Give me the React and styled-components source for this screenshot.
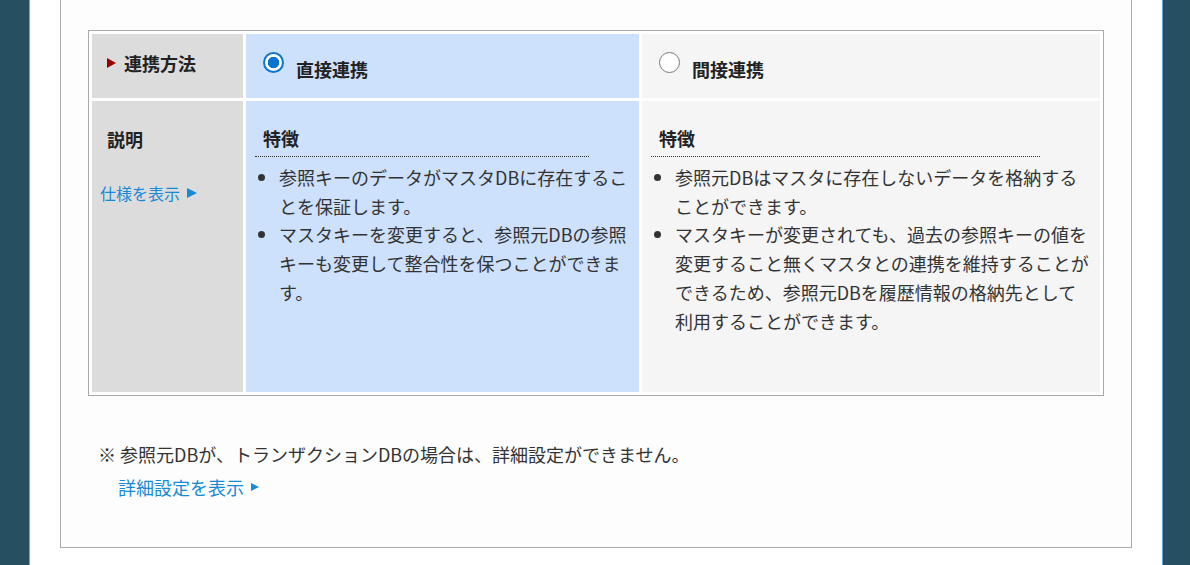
import React from 'react';
import styled, { createGlobalStyle } from 'styled-components';

const GlobalStyle = createGlobalStyle`
  html, body {
    margin: 0;
    padding: 0;
    background: #ffffff;
    overflow: hidden;
  }
  body {
    font-family: 'Noto Sans CJK JP', 'Noto Sans', sans-serif;
    color: #333;
  }
`;

const Page = styled.div`
  display: flex;
  height: 565px;
`;

const SideBar = styled.div`
  flex-shrink: 0;
  width: ${({ $width }) => $width}px;
  background: #264f61;
  border-${({ $edge }) => $edge}: 1px solid #5fa6d8;
`;

const Main = styled.main`
  flex: 1;
  padding: 0 30px;
  background: #ffffff;
`;

const Panel = styled.section`
  background: #fdfdfd;
  border: 1px solid #aaaaaa;
  border-top: none;
  padding: 30px 27px 45px;
`;

const Table = styled.table`
  width: 100%;
  table-layout: fixed;
  border-collapse: separate;
  border-spacing: 3px;
  border: 1px solid #a9a9a9;
  background: #ffffff;
`;

const Cell = styled.td`
  padding: 0;
  vertical-align: top;
  height: ${({ $height }) => $height}px;
  background: ${({ $tone }) =>
    $tone === 'label' ? '#dcdcdc' : $tone === 'selected' ? '#cde0fc' : '#f5f5f5'};
`;

const HeadLabel = styled.div`
  display: flex;
  align-items: center;
  height: 58px;
  padding-left: 15px;
  font-size: 18px;
  font-weight: 700;
  color: #222;

  &::before {
    content: '';
    width: 0;
    height: 0;
    margin-right: 8px;
    border-left: 9px solid #990000;
    border-top: 5.5px solid transparent;
    border-bottom: 5.5px solid transparent;
  }
`;

const OptionHead = styled.label`
  display: flex;
  align-items: flex-start;
  gap: 12px;
  padding: 18px 0 0 17px;
  font-size: 18px;
  font-weight: 700;
  line-height: 28.8px;
  color: #222;

  span:last-child {
    padding-top: 3px;
  }
`;

const Radio = styled.span`
  flex-shrink: 0;
  box-sizing: border-box;
  width: 21px;
  height: 21px;
  border-radius: 50%;
  border: ${({ $checked }) => ($checked ? '2px solid #0a74d0' : '1px solid #7a7a7a')};
  background: ${({ $checked }) =>
    $checked ? 'radial-gradient(circle, #0a74d0 0 5.4px, #ffffff 6px)' : '#ffffff'};
`;

const DescLabel = styled.div`
  padding: 24px 8px 0;
`;

const DescTitle = styled.div`
  padding-left: 7px;
  font-size: 18px;
  font-weight: 700;
  line-height: 28.8px;
  color: #222;
`;

const MoreLink = styled.a`
  display: inline-flex;
  align-items: center;
  margin-top: ${({ $top }) => $top}px;
  margin-left: ${({ $indent }) => $indent || 0}px;
  font-size: ${({ $size }) => $size}px;
  line-height: ${({ $size }) => Math.round($size * 1.6)}px;
  color: #168ad6;
  text-decoration: none;
  cursor: pointer;

  &::after {
    content: '';
    width: 0;
    height: 0;
    margin-left: ${({ $gap }) => $gap}px;
    border-left: ${({ $arrow }) => $arrow}px solid #168ad6;
    border-top: ${({ $arrow }) => $arrow / 2}px solid transparent;
    border-bottom: ${({ $arrow }) => $arrow / 2}px solid transparent;
  }
`;

const Feature = styled.div`
  padding-top: 23px;
`;

const FeatureTitle = styled.h4`
  box-sizing: border-box;
  width: 85%;
  margin: 0 0 0 9px;
  padding: 0 0 3px 8px;
  border-bottom: 1px dotted #333;
  font-size: 18px;
  font-weight: 700;
  line-height: 28.8px;
  color: #222;
`;

const FeatureList = styled.ul`
  margin: 6px 8px 0 9px;
  padding-left: 24px;
  font-size: 18px;
  line-height: 28.8px;
  color: #333;
`;

const Note = styled.p`
  margin: 44px 0 0 10px;
  font-size: 18px;
  line-height: 28.8px;
  color: #333;
`;

const options = [
  {
    name: '直接連携',
    checked: true,
    points: [
      '参照キーのデータがマスタDBに存在することを保証します。',
      'マスタキーを変更すると、参照元DBの参照キーも変更して整合性を保つことができます。',
    ],
  },
  {
    name: '間接連携',
    checked: false,
    points: [
      '参照元DBはマスタに存在しないデータを格納することができます。',
      'マスタキーが変更されても、過去の参照キーの値を変更すること無くマスタとの連携を維持することができるため、参照元DBを履歴情報の格納先として利用することができます。',
    ],
  },
];

const App = () => {
  return (
    <>
      <GlobalStyle />
      <Page>
        <SideBar $width={29} $edge="right" />
        <Main>
          <Panel>
            <Table>
              <colgroup>
                <col style={{ width: 151 }} />
                <col style={{ width: 393 }} />
                <col style={{ width: 458 }} />
              </colgroup>
              <tbody>
                <tr>
                  <Cell $tone="label" $height={64}>
                    <HeadLabel>連携方法</HeadLabel>
                  </Cell>
                  {options.map((opt) => (
                    <Cell key={opt.name} $tone={opt.checked ? 'selected' : 'plain'} $height={64}>
                      <OptionHead>
                        <Radio $checked={opt.checked} />
                        <span>{opt.name}</span>
                      </OptionHead>
                    </Cell>
                  ))}
                </tr>
                <tr>
                  <Cell $tone="label" $height={291}>
                    <DescLabel>
                      <DescTitle>説明</DescTitle>
                      <MoreLink $top={26} $size={16} $arrow={10} $gap={7}>
                        仕様を表示
                      </MoreLink>
                    </DescLabel>
                  </Cell>
                  {options.map((opt) => (
                    <Cell key={opt.name} $tone={opt.checked ? 'selected' : 'plain'} $height={291}>
                      <Feature>
                        <FeatureTitle>特徴</FeatureTitle>
                        <FeatureList>
                          {opt.points.map((p, i) => (
                            <li key={i}>{p}</li>
                          ))}
                        </FeatureList>
                      </Feature>
                    </Cell>
                  ))}
                </tr>
              </tbody>
            </Table>
            <Note>※ 参照元DBが、トランザクションDBの場合は、詳細設定ができません。</Note>
            <MoreLink $top={4} $indent={30} $size={18} $arrow={8} $gap={7}>
              詳細設定を表示
            </MoreLink>
          </Panel>
        </Main>
        <SideBar $width={27} $edge="left" />
      </Page>
    </>
  );
};

export default App;
